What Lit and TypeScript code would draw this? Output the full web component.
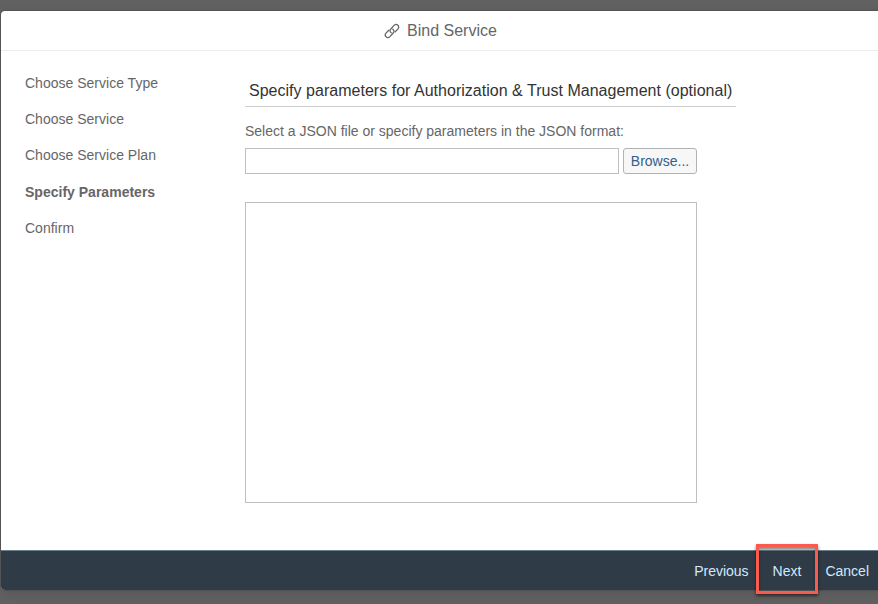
import { LitElement, html, css } from "lit";
import { customElement, property } from "lit/decorators.js";
import { classMap } from "lit/directives/class-map.js";

@customElement("wizard-steps")
class WizardSteps extends LitElement {
  @property({ attribute: false }) steps: string[] = [];
  @property({ type: Number }) current = 0;

  static styles = css`
    :host { display: block; width: 244px; flex: none; box-sizing: border-box; padding: 14px 0 0 24px; }
    .list { list-style: none; margin: 0; padding: 0; }
    .step { height: 36.2px; line-height: 36.2px; color: #666; white-space: nowrap; letter-spacing: 0.01px; }
    .current { font-weight: bold; }
  `;

  render() {
    return html`<ul class="list">
      ${this.steps.map((s, i) => html`<li class=${classMap({ step: true, current: i === this.current })}>${s}</li>`)}
    </ul>`;
  }
}

@customElement("app-root")
class AppRoot extends LitElement {
  static styles = css`
    :host {
      display: block; box-sizing: border-box; width: 100vw; height: 100vh; overflow: hidden;
      padding: 11px 0 0 1px; background: #626262;
      font: 14px "Liberation Sans", Arial, sans-serif; color: #666;
    }
    .dialog {
      display: flex; flex-direction: column; box-sizing: border-box; width: 885px; height: 579px;
      background: #fff; border-radius: 4px; box-shadow: 0 0 2px rgba(0, 0, 0, 0.35), 0 4px 18px rgba(0, 0, 0, 0.12);
    }
    .header {
      height: 40px; flex: none; box-sizing: border-box; width: 877px; border-bottom: 1px solid #ececec;
      display: flex; align-items: center; justify-content: center; gap: 7px; padding-left: 2px;
      font-size: 16px; color: #666;
    }
    .link { width: 16px; height: 16px; display: block; }
    .body { flex: 1; display: flex; min-height: 0; }
    .form { flex: none; width: 491px; padding-top: 24px; }
    .heading {
      margin: 0; height: 31px; line-height: 31px; padding-left: 4px; border-bottom: 1px solid #ccc;
      font-size: 16px; font-weight: normal; color: #333; white-space: nowrap; letter-spacing: 0.02px;
    }
    .label { display: block; margin-top: 15px; height: 18px; line-height: 18px; white-space: nowrap; }
    .file { display: flex; gap: 4px; margin-top: 8px; width: 452px; height: 26px; }
    .path { flex: 1; min-width: 0; box-sizing: border-box; border: 1px solid #bfbfbf; background: #fff; padding: 0 8px; outline: none; margin: 0; }
    .browse {
      width: 74px; box-sizing: border-box; border: 1px solid #b3b3b3; border-radius: 3px; background: #f7f7f7;
      color: #346187; font: inherit; padding: 0; margin: 0;
    }
    .json {
      display: block; box-sizing: border-box; width: 452px; height: 301px; margin: 28px 0 0;
      border: 1px solid #bfbfbf; resize: none; background: #fff; outline: none;
    }
    .footer {
      height: 40px; flex: none; box-sizing: border-box; border-top: 1px solid #68808b; background: #2f3c48;
      border-radius: 0 0 4px 4px; display: flex; justify-content: flex-end; padding-right: 17px;
    }
    .action {
      position: relative; border: 0; margin: 0; padding: 1px 0 0 24px; background: none;
      font: inherit; color: #d1e8ff;
    }
    .marker {
      position: absolute; left: 7px; top: -7px; width: 62px; height: 50px; box-sizing: border-box;
      border: 3px solid #fa5b4d; box-shadow: 0 2px 3px rgba(0, 0, 0, 0.55), inset 0 3px 3px rgba(0, 0, 0, 0.45);
    }
  `;

  render() {
    return html`
      <section class="dialog">
        <header class="header">
          <svg class="link" viewBox="0 0 16 16" fill="none" stroke="#666" stroke-width="1.3" stroke-linecap="round">
            <path d="M7.2 9.8C5.8 8.8 5.7 7.1 6.8 6L10.1 2.4C11.3 1.2 12.8 1.2 13.9 2.2C15 3.3 15 4.9 13.8 6.1L11.2 8.8"/>
            <path d="M8.8 6.2C10.2 7.2 10.3 8.9 9.2 10L5.9 13.6C4.7 14.8 3.2 14.8 2.1 13.8C1 12.7 1 11.1 2.2 9.9L4.8 7.2"/>
          </svg>
          <span>Bind Service</span>
        </header>
        <div class="body">
          <wizard-steps
            .steps=${["Choose Service Type", "Choose Service", "Choose Service Plan", "Specify Parameters", "Confirm"]}
            .current=${3}
          ></wizard-steps>
          <main class="form">
            <h2 class="heading">Specify parameters for Authorization &amp; Trust Management (optional)</h2>
            <label class="label">Select a JSON file or specify parameters in the JSON format:</label>
            <div class="file">
              <input class="path" type="text" />
              <button class="browse">Browse...</button>
            </div>
            <textarea class="json"></textarea>
          </main>
        </div>
        <footer class="footer">
          <button class="action">Previous</button>
          <button class="action">Next<span class="marker"></span></button>
          <button class="action">Cancel</button>
        </footer>
      </section>
    `;
  }
}
